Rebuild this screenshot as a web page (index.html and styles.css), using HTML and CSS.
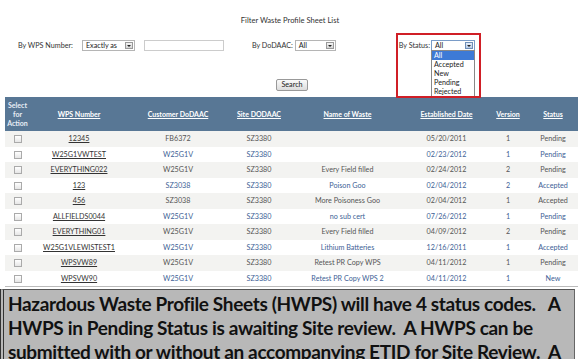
FILE: index.html
```html
<!DOCTYPE html>
<html lang="en">
<head>
    <meta charset="UTF-8">
    <title>Filter Waste Profile Sheet List</title>
    <link rel="stylesheet" href="styles.css">
</head>
<body>
    <div class="page">
        <div class="title">Filter Waste Profile Sheet List</div>

        <div class="filters">
            <div class="filter wps">
                <span class="label">By WPS Number:</span>
                <div class="select sel-exact">Exactly as <span class="arrow"></span></div>
                <div class="input"></div>
            </div>
            <div class="filter dodaac">
                <span class="label">By DoDAAC:</span>
                <div class="select sel-all">All <span class="arrow"></span></div>
            </div>
            <div class="filter status">
                <span class="label">By Status:</span>
                <div class="select sel-status">All <span class="arrow"></span>
                    <ul class="options">
                        <li class="active">All</li>
                        <li>Accepted</li>
                        <li>New</li>
                        <li>Pending</li>
                        <li>Rejected</li>
                    </ul>
                </div>
                <div class="highlight"></div>
            </div>
        </div>

        <div class="actions">
            <span class="btn">Search</span>
        </div>

        <table class="list">
            <colgroup>
                <col style="width:25px"><col style="width:98px"><col style="width:100px"><col style="width:62px">
                <col style="width:115px"><col style="width:83px"><col style="width:40px"><col style="width:50px">
            </colgroup>
            <thead>
                <tr>
                    <th class="sel">Select<br>for<br>Action</th>
                    <th><u>WPS Number</u></th>
                    <th><u>Customer DoDAAC</u></th>
                    <th><u>Site DODAAC</u></th>
                    <th><u>Name of Waste</u></th>
                    <th><u>Established Date</u></th>
                    <th><u>Version</u></th>
                    <th><u>Status</u></th>
                </tr>
            </thead>
            <tbody>
                <tr><td><span class="box"></span></td><td class="wps-link">12345</td><td>FB6372</td><td>SZ3380</td><td></td><td>05/20/2011</td><td>1</td><td>Pending</td></tr>
                <tr><td><span class="box"></span></td><td class="wps-link">W25G1VWTEST</td><td>W25G1V</td><td>SZ3380</td><td></td><td>02/23/2012</td><td>1</td><td>Pending</td></tr>
                <tr><td><span class="box"></span></td><td class="wps-link">EVERYTHING022</td><td>W25G1V</td><td>SZ3380</td><td>Every Field filled</td><td>02/24/2012</td><td>2</td><td>Pending</td></tr>
                <tr><td><span class="box"></span></td><td class="wps-link">123</td><td>SZ3038</td><td>SZ3380</td><td>Poison Goo</td><td>02/04/2012</td><td>2</td><td>Accepted</td></tr>
                <tr><td><span class="box"></span></td><td class="wps-link">456</td><td>SZ3038</td><td>SZ3380</td><td>More Poisoness Goo</td><td>02/04/2012</td><td>1</td><td>Accepted</td></tr>
                <tr><td><span class="box"></span></td><td class="wps-link">ALLFIELDS0044</td><td>W25G1V</td><td>SZ3380</td><td>no sub cert</td><td>07/26/2012</td><td>1</td><td>Pending</td></tr>
                <tr><td><span class="box"></span></td><td class="wps-link">EVERYTHING01</td><td>W25G1V</td><td>SZ3380</td><td>Every Field filled</td><td>04/09/2012</td><td>2</td><td>Pending</td></tr>
                <tr><td><span class="box"></span></td><td class="wps-link">W25G1VLEWISTEST1</td><td>W25G1V</td><td>SZ3380</td><td>Lithium Batteries</td><td>12/16/2011</td><td>1</td><td>Accepted</td></tr>
                <tr><td><span class="box"></span></td><td class="wps-link">WPSVW89</td><td>W25G1V</td><td>SZ3380</td><td>Retest PR Copy WPS</td><td>04/11/2012</td><td>1</td><td>Pending</td></tr>
                <tr><td><span class="box"></span></td><td class="wps-link">WPSVW90</td><td>W25G1V</td><td>SZ3380</td><td>Retest PR Copy WPS 2</td><td>04/11/2012</td><td>1</td><td>New</td></tr>
            </tbody>
        </table>

        <div class="note">
            Hazardous Waste Profile Sheets (HWPS) will have 4 status codes.&nbsp;&nbsp; A<br>
            HWPS in Pending Status is awaiting Site review.&nbsp; A HWPS can be<br>
            submitted with or without an accompanying ETID for Site Review.&nbsp; A
        </div>
    </div>
</body>
</html>
```

FILE: styles.css
```css
/* General */
* {
    margin: 0;
    padding: 0;
    box-sizing: border-box;
}

body {
    background: #fff;
    font-family: Lato, 'Open Sans', sans-serif;
    font-size: 7.2px;
    color: #444;
    overflow: hidden;
}

.page {
    width: 580px;
    height: 359px;
    overflow: hidden;
}

.title {
    text-align: center;
    padding-top: 15px;
    height: 34px;
    color: #333;
    font-size: 7.6px;
}

/* Filters */
.filters {
    display: flex;
    align-items: center;
    height: 22px;
}

.filter {
    display: flex;
    align-items: center;
    position: relative;
}

.wps {
    margin-left: 18px;
}

.dodaac {
    margin-left: 28px;
}

.status {
    margin-left: 63px;
}

.label {
    color: #333;
}

.select {
    position: relative;
    height: 11px;
    line-height: 9px;
    border: 1px solid #b5b5b5;
    background: #fff;
    padding-left: 3px;
    color: #222;
}

.arrow {
    position: absolute;
    right: 1px;
    top: 1px;
    width: 8px;
    height: 7px;
    border: 1px solid #999;
    background: linear-gradient(#f4f4f4, #d5d5d5);
}

.arrow::after {
    content: "";
    position: absolute;
    left: 1px;
    top: 2px;
    border-left: 2px solid transparent;
    border-right: 2px solid transparent;
    border-top: 2px solid #222;
}

.sel-exact {
    width: 53px;
    margin-left: 9px;
}

.input {
    width: 80px;
    height: 11px;
    margin-left: 9px;
    border: 1px solid #ccc;
}

.sel-all {
    width: 41px;
    margin-left: 2px;
}

.sel-status {
    width: 44px;
    margin-left: 1px;
    border-color: #7a9cc8;
}

.sel-status .arrow {
    background: linear-gradient(#e6eefa, #b7cbe8);
    border-color: #6f8fb8;
}

.options {
    list-style: none;
    position: absolute;
    left: -1px;
    top: 9px;
    width: 44px;
    border: 1px solid #888;
    background: #fff;
    z-index: 3;
}

.options li {
    height: 9px;
    line-height: 9px;
    padding-left: 2px;
    color: #222;
}

.options li.active {
    background: #3d7ad6;
    color: #fff;
}

.highlight {
    position: absolute;
    left: -3px;
    top: -7px;
    width: 85px;
    height: 65px;
    border: 2px solid #d01f26;
    z-index: 4;
    pointer-events: none;
}

/* Search */
.actions {
    display: flex;
    justify-content: center;
    padding-left: 4px;
    height: 41px;
    padding-top: 23px;
}

.btn {
    display: inline-block;
    height: 12px;
    line-height: 10px;
    padding: 0 4px;
    border: 1px solid #999;
    border-radius: 2px;
    background: linear-gradient(#fafafa, #dcdcdc);
    color: #222;
}

/* Table */
.list {
    margin-left: 5px;
    width: 573px;
    border-collapse: collapse;
    table-layout: fixed;
    border-bottom: 1px solid #bbb;
}

.list th {
    background: #587795;
    color: #fff;
    font-weight: bold;
    height: 34px;
    text-align: center;
    font-size: 7px;
}

.list th.sel {
    line-height: 9px;
    color: #e8eef5;
}

.list td {
    height: 15.5px;
    text-align: center;
    color: #3e5f96;
    white-space: nowrap;
}

.list tbody tr:nth-child(odd) td {
    background: #f3f3f1;
    color: #555;
}

.list td.wps-link,
.list tbody tr:nth-child(odd) td.wps-link {
    color: #333;
    text-decoration: underline;
}

.box {
    display: inline-block;
    width: 8px;
    height: 8px;
    border: 1px solid #aaa;
    background: linear-gradient(#fff, #e6e6e6);
    vertical-align: middle;
}

/* Note */
.note {
    margin-top: 2px;
    margin-right: 5px;
    height: 80px;
    background: #b8b8b8;
    border-left: 4px double #333;
    border-top: 1px solid #555;
    border-right: 1px solid #666;
    padding: 2px 0 0 4px;
    font-family: Lato, 'Open Sans', sans-serif;
    font-weight: bold;
    font-size: 19px;
    letter-spacing: -0.35px;
    line-height: 24px;
    color: #111;
    white-space: nowrap;
}
```
